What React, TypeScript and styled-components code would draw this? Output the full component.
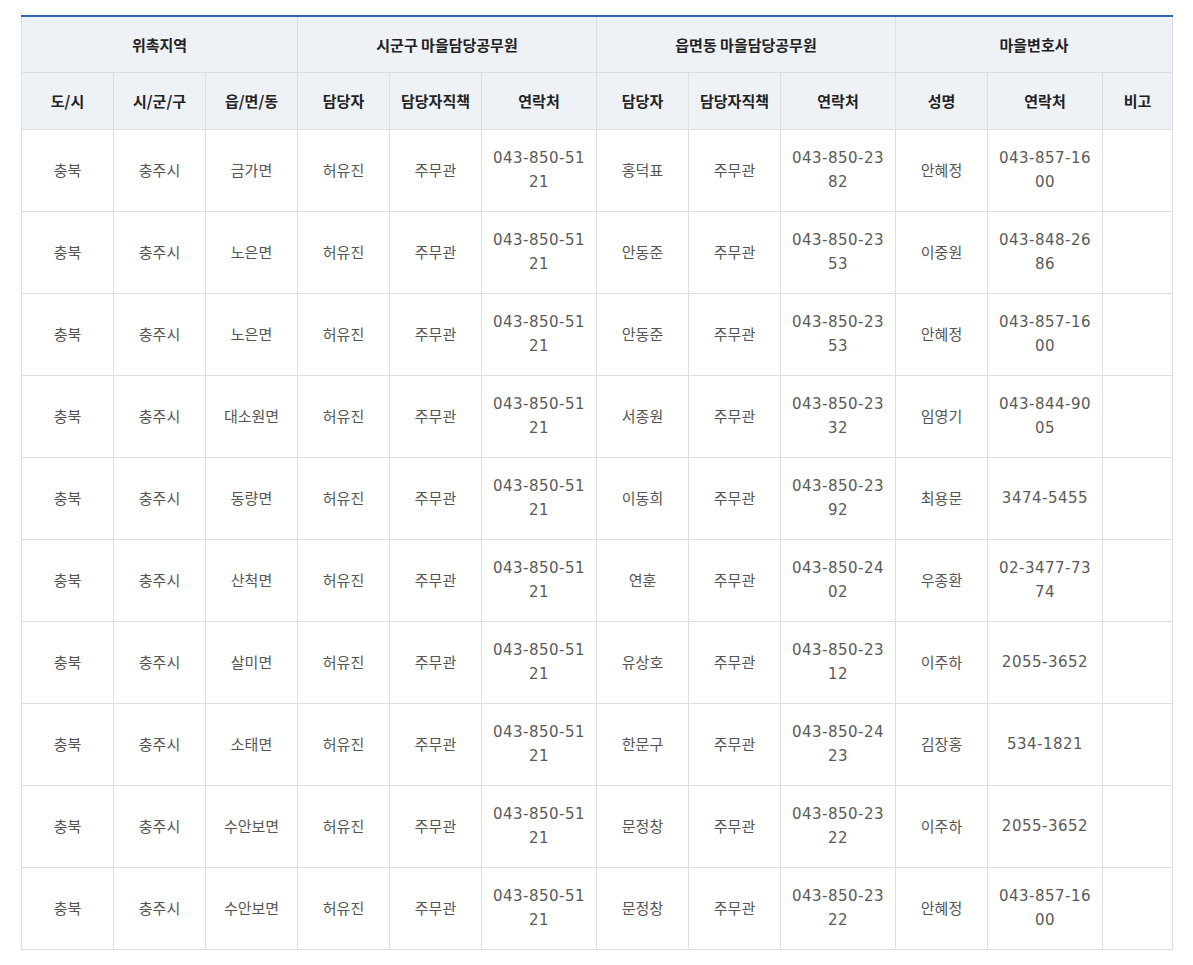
import React from 'react'
import styled, { createGlobalStyle } from 'styled-components'

const GlobalStyle = createGlobalStyle`
  body {
    margin: 0;
    background: #fff;
    font-family: "Noto Sans CJK KR", "Noto Sans", sans-serif;
  }
`

interface Row {
  sido: string
  sigungu: string
  town: string
  officer: string
  officerRole: string
  officerTel: string
  townOfficer: string
  townRole: string
  townTel: string
  lawyer: string
  lawyerTel: string
  note: string
}

const base = { sido: '충북', sigungu: '충주시', officer: '허유진', officerRole: '주무관', officerTel: '043-850-5121', townRole: '주무관', note: '' }

const rows: Row[] = [
  { ...base, town: '금가면', townOfficer: '홍덕표', townTel: '043-850-2382', lawyer: '안혜정', lawyerTel: '043-857-1600' },
  { ...base, town: '노은면', townOfficer: '안동준', townTel: '043-850-2353', lawyer: '이중원', lawyerTel: '043-848-2686' },
  { ...base, town: '노은면', townOfficer: '안동준', townTel: '043-850-2353', lawyer: '안혜정', lawyerTel: '043-857-1600' },
  { ...base, town: '대소원면', townOfficer: '서종원', townTel: '043-850-2332', lawyer: '임영기', lawyerTel: '043-844-9005' },
  { ...base, town: '동량면', townOfficer: '이동희', townTel: '043-850-2392', lawyer: '최용문', lawyerTel: '3474-5455' },
  { ...base, town: '산척면', townOfficer: '연훈', townTel: '043-850-2402', lawyer: '우종환', lawyerTel: '02-3477-7374' },
  { ...base, town: '살미면', townOfficer: '유상호', townTel: '043-850-2312', lawyer: '이주하', lawyerTel: '2055-3652' },
  { ...base, town: '소태면', townOfficer: '한문구', townTel: '043-850-2423', lawyer: '김장홍', lawyerTel: '534-1821' },
  { ...base, town: '수안보면', townOfficer: '문정창', townTel: '043-850-2322', lawyer: '이주하', lawyerTel: '2055-3652' },
  { ...base, town: '수안보면', townOfficer: '문정창', townTel: '043-850-2322', lawyer: '안혜정', lawyerTel: '043-857-1600' },
]

const colWidths = [92, 92, 92, 92, 92, 115, 92, 92, 115, 92, 115, 70]

const App: React.FC = () => {
  return (
    <>
      <GlobalStyle />
      <StyledPage>
        <StyledTable>
          <colgroup>
            {colWidths.map((w, i) => (
              <col key={i} style={{ width: w }} />
            ))}
          </colgroup>
          <thead>
            <StyledHeadRow rowHeight={56}>
              <StyledTh colSpan={3}>위촉지역</StyledTh>
              <StyledTh colSpan={3}>시군구 마을담당공무원</StyledTh>
              <StyledTh colSpan={3}>읍면동 마을담당공무원</StyledTh>
              <StyledTh colSpan={3}>마을변호사</StyledTh>
            </StyledHeadRow>
            <StyledHeadRow rowHeight={57}>
              <StyledTh>도/시</StyledTh>
              <StyledTh>시/군/구</StyledTh>
              <StyledTh>읍/면/동</StyledTh>
              <StyledTh>담당자</StyledTh>
              <StyledTh>담당자직책</StyledTh>
              <StyledTh>연락처</StyledTh>
              <StyledTh>담당자</StyledTh>
              <StyledTh>담당자직책</StyledTh>
              <StyledTh>연락처</StyledTh>
              <StyledTh>성명</StyledTh>
              <StyledTh>연락처</StyledTh>
              <StyledTh>비고</StyledTh>
            </StyledHeadRow>
          </thead>
          <tbody>
            {rows.map((r, i) => (
              <StyledRow key={i}>
                <StyledTd>{r.sido}</StyledTd>
                <StyledTd>{r.sigungu}</StyledTd>
                <StyledTd>{r.town}</StyledTd>
                <StyledTd>{r.officer}</StyledTd>
                <StyledTd>{r.officerRole}</StyledTd>
                <StyledTd tel>{r.officerTel}</StyledTd>
                <StyledTd>{r.townOfficer}</StyledTd>
                <StyledTd>{r.townRole}</StyledTd>
                <StyledTd tel>{r.townTel}</StyledTd>
                <StyledTd>{r.lawyer}</StyledTd>
                <StyledTd tel>{r.lawyerTel}</StyledTd>
                <StyledTd>{r.note}</StyledTd>
              </StyledRow>
            ))}
          </tbody>
        </StyledTable>
      </StyledPage>
    </>
  )
}

const StyledPage = styled.div`
  padding: 15px 0 0 21px;
`

const StyledTable = styled.table`
  border-collapse: collapse;
  table-layout: fixed;
  width: 1152px;
  border-top: 2px solid #3565b8;
`

const StyledHeadRow = styled.tr<{ rowHeight: number }>`
  height: ${(props) => props.rowHeight}px;
  background: #eef1f6;
`

const StyledTh = styled.th`
  border: 1px solid #dcdee2;
  border-top: 0;
  padding: 0 6px;
  font-size: 15px;
  font-weight: 700;
  color: #222;
  text-align: center;
  vertical-align: middle;
`

const StyledRow = styled.tr`
  height: 82px;
`

const StyledTd = styled.td<{ tel?: boolean }>`
  border: 1px solid #dcdee2;
  padding: 14px 10px;
  font-family: ${(props) => (props.tel ? '"DejaVu Sans", "Noto Sans CJK KR", sans-serif' : 'inherit')};
  font-size: 15px;
  letter-spacing: ${(props) => (props.tel ? 0.5 : 0)}px;
  line-height: 24px;
  color: ${(props) => (props.tel ? '#5a5a5a' : '#555')};
  text-align: center;
  vertical-align: middle;
  word-break: break-all;
`

export default App
